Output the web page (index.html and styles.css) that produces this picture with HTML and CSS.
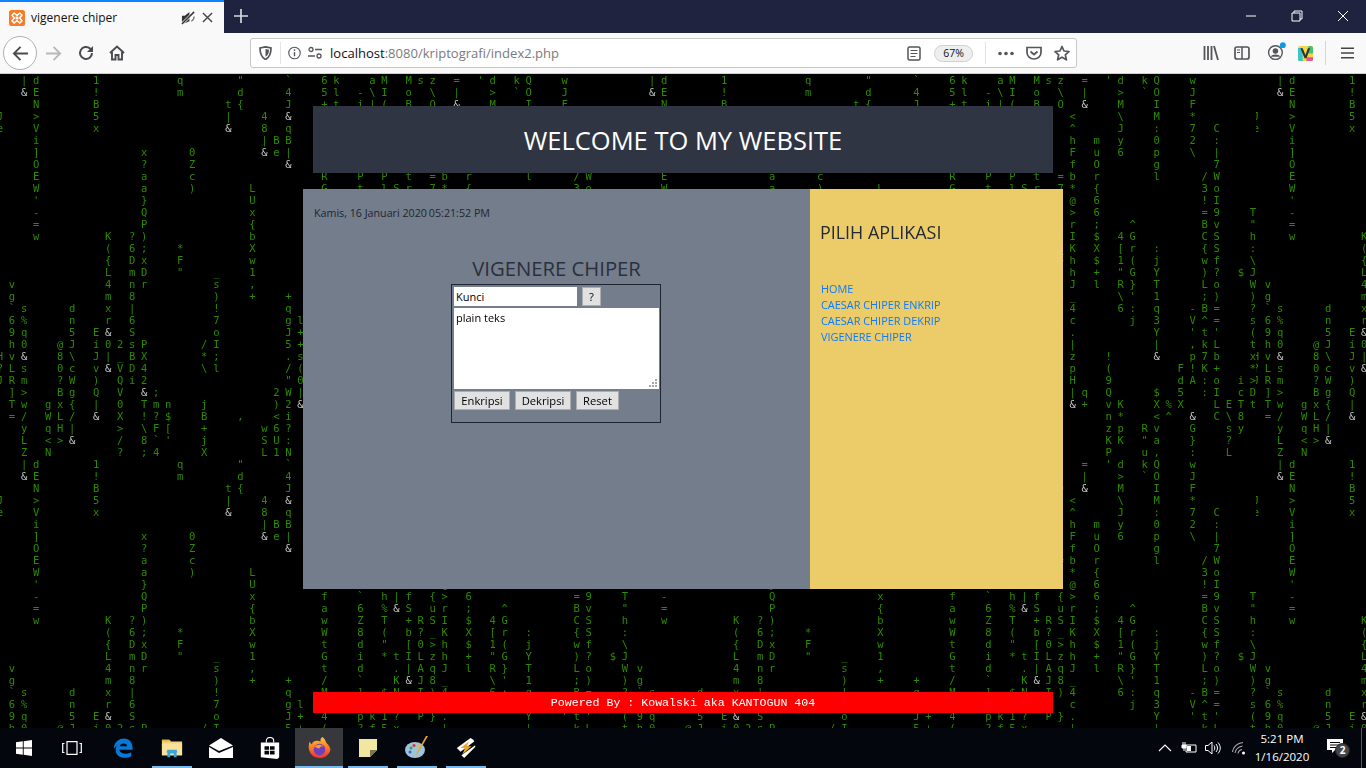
FILE: index.html
```html
<!DOCTYPE html>
<html lang="id">
<head>
<meta charset="utf-8">
<title>vigenere chiper</title>
<link rel="stylesheet" href="styles.css">
</head>
<body>
<header class="browser">
  <div class="tabbar">
    <div class="tab">
      <svg class="fav" viewBox="0 0 16 16"><rect width="16" height="16" rx="2.5" fill="#fb7a24"/><path d="M3 5.2 5.2 3 8 5.4 10.8 3 13 5.2 10.6 8 13 10.8 10.8 13 8 10.6 5.2 13 3 10.8 5.4 8Z" fill="none" stroke="#fff" stroke-width="1.6" stroke-linejoin="round"/><rect x="6.6" y="6.6" width="2.8" height="2.8" fill="#fff"/></svg>
      <span class="tab-title">vigenere chiper</span>
      <svg class="mute" viewBox="0 0 16 16"><path d="M1 6h3l5-4v10l-5 2H1Z" fill="#333"/><path d="M1 15 14 2" stroke="#fff" stroke-width="3"/><path d="M1 15 14 2" stroke="#333" stroke-width="1.6"/><path d="M11 12c2-1 3-3 3-5" fill="none" stroke="#666" stroke-width="1.2"/></svg>
      <svg class="tabx" viewBox="0 0 12 12"><path d="M1 1 11 11M11 1 1 11" stroke="#444" stroke-width="1.5"/></svg>
    </div>
    <svg class="plus" viewBox="0 0 14 14"><path d="M7 0v14M0 7h14" stroke="#d7d8de" stroke-width="1.7"/></svg>
    <div class="winctl">
      <span class="wc"><svg class="wci" viewBox="0 0 12 12"><path d="M1 6h10" stroke="#fff"/></svg></span>
      <span class="wc"><svg class="wci" viewBox="0 0 12 12"><path d="M3 3V1h8v8H9M1 3h8v8H1Z" fill="none" stroke="#fff"/></svg></span>
      <span class="wc"><svg class="wci" viewBox="0 0 12 12"><path d="M1 1 11 11M11 1 1 11" stroke="#fff"/></svg></span>
    </div>
  </div>
  <div class="toolbar">
    <span class="backbtn"><svg class="i18" viewBox="0 0 18 18"><path d="M17 9H2M9 2 2 9l7 7" fill="none" stroke="#4a4a4f" stroke-width="2"/></svg></span>
    <svg class="i18 fwd" viewBox="0 0 18 18"><path d="M1 9h15M9 2l7 7-7 7" fill="none" stroke="#b8b8ba" stroke-width="2"/></svg>
    <svg class="i16 reload" viewBox="0 0 16 16"><path d="M14 8a6 6 0 1 1-2-4.5L14 6" fill="none" stroke="#4a4a4f" stroke-width="2"/><path d="M15 1v6H9Z" fill="#4a4a4f"/></svg>
    <svg class="i16 home" viewBox="0 0 16 16"><path d="M1 8 8 1.500 15 8M3 7v7.500h3.500V10h3v4.500H13V7" fill="none" stroke="#4a4a4f" stroke-width="1.900"/></svg>
    <div class="urlbar">
      <svg class="i13 shield" viewBox="0 0 13 14"><path d="M1 2 6.500 .8 12 2c0 5-.8 9-5.500 11.500C1.800 11 1 7 1 2Z" fill="none" stroke="#55555a" stroke-width="1.700"/><path d="M6.500 3 10 3.800c0 3-.8 5.500-3.500 7Z" fill="#55555a"/></svg>
      <span class="url-sep"></span>
      <svg class="i13 info" viewBox="0 0 14 14"><circle cx="7" cy="7" r="6.200" fill="none" stroke="#55555a" stroke-width="1.200"/><path d="M7 6v4.500" stroke="#55555a" stroke-width="1.500"/><circle cx="7" cy="3.900" r="1" fill="#55555a"/></svg>
      <svg class="i14 perm" viewBox="0 0 14 14"><circle cx="3" cy="3.500" r="2" fill="none" stroke="#55555a" stroke-width="1.300"/><path d="M7 3.500h7M0 10h7" stroke="#55555a" stroke-width="1.500"/><circle cx="11" cy="10" r="2" fill="none" stroke="#55555a" stroke-width="1.300"/></svg>
      <span class="url"><span class="url-host">localhost</span>:8080/kriptografi/index2.php</span>
      <svg class="i14 reader" viewBox="0 0 14 15"><rect x="1" y="1" width="12" height="13" rx="1.500" fill="none" stroke="#55555a" stroke-width="1.500"/><path d="M3.500 4.500h7M3.500 7.500h7M3.500 10.500h5" stroke="#55555a" stroke-width="1.200"/></svg>
      <span class="zoom-pill">67%</span>
      <span class="url-sep2"></span>
      <svg class="i16 dots" viewBox="0 0 16 4"><circle cx="2" cy="2" r="1.800" fill="#55555a"/><circle cx="8" cy="2" r="1.800" fill="#55555a"/><circle cx="14" cy="2" r="1.800" fill="#55555a"/></svg>
      <svg class="i16 pocket" viewBox="0 0 16 14"><path d="M1 1.500h14v5a7 6.500 0 0 1-14 0Z" fill="none" stroke="#55555a" stroke-width="1.700"/><path d="M4.500 5.500 8 8.500l3.500-3" fill="none" stroke="#55555a" stroke-width="1.800"/></svg>
      <svg class="i16 star" viewBox="0 0 16 16"><path d="M8 1.500 10 6l5 .5-3.700 3.300 1.100 5L8 12.200 3.600 14.800l1.100-5L1 6.500 6 6Z" fill="none" stroke="#55555a" stroke-width="1.700" stroke-linejoin="round"/></svg>
    </div>
    <svg class="i16 lib" viewBox="0 0 16 16"><path d="M1.500 1v14M5 1v14M8.500 1v14" stroke="#55555a" stroke-width="1.800"/><path d="M11 1l4 14" stroke="#55555a" stroke-width="1.800"/></svg>
    <svg class="i16 side" viewBox="0 0 16 14"><rect x="1" y="1" width="14" height="12" rx="2" fill="none" stroke="#55555a" stroke-width="1.700"/><path d="M8 1v12" stroke="#55555a" stroke-width="1.500"/><path d="M3 4h3M3 6.500h3" stroke="#55555a"/></svg>
    <svg class="acct" viewBox="0 0 18 18"><circle cx="8" cy="10" r="6.500" fill="none" stroke="#55555a" stroke-width="1.300"/><circle cx="8" cy="8.500" r="2.600" fill="#55555a"/><path d="M3.500 14c1-3 8-3 9 0" fill="#55555a"/><circle cx="15" cy="3" r="2.800" fill="#0a9be8"/></svg>
    <svg class="vext" viewBox="0 0 16 16"><rect width="16" height="16" rx="2" fill="#f6d743"/><path d="M0 2h5v14H2a2 2 0 0 1-2-2Z" fill="#36c6c9"/><path d="M11 0h3a2 2 0 0 1 2 2v6h-5Z" fill="#45c46a"/><path d="M9 12h7v2a2 2 0 0 1-2 2H9Z" fill="#e8549a"/><path d="M2.500 2.500 7 13h2l4-10.500h-2.500L8 9.500 5 2.500Z" fill="#333"/></svg>
    <span class="bar-sep"></span>
    <svg class="menu" viewBox="0 0 14 12"><path d="M0 1h14M0 6h14M0 11h14" stroke="#444" stroke-width="1.600"/></svg>
  </div>
</header>

<main class="page">
  <div class="matrix" id="matrix"></div>
  <div class="wrap">
    <div class="site-head"><h1 class="site-title">WELCOME TO MY WEBSITE</h1></div>
    <div class="columns">
      <section class="content">
        <p class="clock">Kamis, 16 Januari 2020<span class="time">05:21:52 PM</span></p>
        <h2 class="app-title">VIGENERE CHIPER</h2>
        <form class="cipher">
          <div class="keyrow">
            <input class="key" type="text" value="Kunci">
            <button class="btn btn-q" type="button">?</button>
          </div>
          <div class="plain-box">
            <textarea class="plain">plain teks</textarea>
            <svg class="grip" viewBox="0 0 8 8"><path d="M6 0h2v2H6ZM3 3h2v2H3ZM6 3h2v2H6ZM0 6h2v2H0ZM3 6h2v2H3ZM6 6h2v2H6Z" fill="#a8a8a8"/></svg>
          </div>
          <div class="actions">
            <button class="btn btn-a" type="button">Enkripsi</button>
            <button class="btn btn-a" type="button">Dekripsi</button>
            <button class="btn btn-r" type="button">Reset</button>
          </div>
        </form>
      </section>
      <aside class="side-panel">
        <h3 class="side-title">PILIH APLIKASI</h3>
        <nav class="side-nav">
          <a href="#">HOME</a>
          <a href="#">CAESAR CHIPER ENKRIP</a>
          <a href="#">CAESAR CHIPER DEKRIP</a>
          <a href="#">VIGENERE CHIPER</a>
        </nav>
      </aside>
    </div>
    <footer class="site-foot">Powered By : Kowalski aka KANTOGUN 404</footer>
  </div>
</main>

<footer class="taskbar">
  <span class="tb"><svg class="win" viewBox="0 0 16 16"><path d="M0 2.300 6.800 1.300V7.500H0ZM7.700 1.200 16 0V7.500H7.700ZM0 8.400H6.800V14.700L0 13.700ZM7.700 8.400H16V16L7.700 14.800Z" fill="#fff"/></svg></span>
  <span class="tb"><svg class="tv" viewBox="0 0 20 14"><path d="M5 .7h10v12.600H5ZM2.500 2.500H.7v9h1.800M17.500 2.500h1.800v9h-1.800" fill="none" stroke="#fff" stroke-width="1.200"/></svg></span>
  <span class="tb tb-first"><svg class="ic" viewBox="0 0 24 24"><path d="M2 13C2 5 8 1.500 13 1.500c6 0 9.500 4.500 9.500 10.500v2H8c.3 4 7 6 13 2.500v4.500c-7 3.500-17 2-17-7 0-2 1-4.500 3-6C5 10 3 11.500 2 13ZM8.500 10h8c0-4-7.500-4-8 0Z" fill="#0a78d7"/></svg></span>
  <span class="tb on"><svg class="ic" viewBox="0 0 24 24"><path d="M1 3h8l2 2h12v15H1Z" fill="#f3d47b"/><path d="M1 3h8l2 2H1Z" fill="#e6b84f"/><path d="M1 7h22v13H1Z" fill="#fbe29a"/><path d="M7 22v-5h-1l1-3h10l1 3h-1v5h-3v-4h-4v4Z" fill="#3aa7dc"/></svg></span>
  <span class="tb"><svg class="ic-w" viewBox="0 0 24 20"><path d="M0 7.500 12 0l12 7.500L10 13Z" fill="#fff"/><path d="M0 9v11h24V9L10 15Z" fill="#fff"/></svg></span>
  <span class="tb"><svg class="ic" viewBox="0 0 22 24"><path d="M1 6h20v16l-2 2L1 22Z" fill="#fff"/><path d="M7 6V4a4 3.500 0 0 1 8 0v2" fill="none" stroke="#fff" stroke-width="1.200"/><path d="M5 10h5v4H5ZM11 10h5v4h-5ZM5 15h5v4H5ZM11 15h5v4h-5Z" fill="#03060d"/></svg></span>
  <span class="tb active"><svg class="fx" viewBox="0 0 24 24"><defs><linearGradient id="fxg" x1="0" y1="0" x2="0" y2="1"><stop offset="0" stop-color="#ffc43a"/><stop offset=".5" stop-color="#ff7a20"/><stop offset="1" stop-color="#e8303a"/></linearGradient></defs><path d="M15 0c4 3 3 5 5 7 3 3 3.500 6 3.500 6A11.500 11.500 0 1 1 1 8c0-2 .8-3 1-3 .3 1.500 1 2 2 2.500C5 5 7 4 9 4c2 0 3 .5 4 1 0-2 0-4 2-5Z" fill="url(#fxg)"/><circle cx="12" cy="13" r="6" fill="#6b3fc0"/><path d="M7 10c2-2 6-3 9 0-2-.5-4 0-4 2-2 0-4-1-5-2Z" fill="#ff9a30"/></svg></span>
  <span class="tb on"><svg class="note" viewBox="0 0 18 18"><path d="M0 0h18v11l-7 7H0Z" fill="#f2e7a0"/><path d="M18 11h-7v7Z" fill="#7b7650"/></svg></span>
  <span class="tb on"><svg class="ic paint" viewBox="0 0 24 24"><ellipse cx="10" cy="14" rx="10" ry="8" fill="#9ec4dc"/><circle cx="6" cy="12" r="1.500" fill="#3aa05a"/><circle cx="9" cy="9.500" r="1.500" fill="#d33"/><circle cx="5" cy="16" r="1.500" fill="#36c"/><circle cx="13" cy="10" r="1.500" fill="#eb3"/><path d="M23 0 13 17l-2 3 1-4L21 0Z" fill="#e8a33d"/></svg></span>
  <span class="tb on"><svg class="ic" viewBox="0 0 22 24"><path d="M16 1 1 12l4 4 15-11-1-2Z" fill="#fff"/><path d="M21 9 6 20l3 3 12-12Z" fill="#fff"/><path d="M14 5 5 12h5l-3 7 10-9h-5Z" fill="#f2a81d"/></svg></span>
  <div class="tray">
    <svg class="chev" viewBox="0 0 14 8"><path d="M1 7 7 1l6 6" fill="none" stroke="#fff" stroke-width="1.100"/></svg>
    <svg class="batt" viewBox="0 0 16 12"><path d="M5 3h10v7H5Z" fill="none" stroke="#fff"/><path d="M6 4h4v5H6Z" fill="#fff"/><path d="M1 3h4v3H1ZM2 0v3M4 0v3M3 6v3" stroke="#fff" fill="#fff"/></svg>
    <svg class="spk" viewBox="0 0 16 14"><path d="M.5 4.500H3L7 1v12L3 9.500H.5Z" fill="none" stroke="#fff"/><path d="M9 4.500c1 1.500 1 3.500 0 5M11 3c2 2.500 2 5.500 0 8M13 1.500c3 3.500 3 7.500 0 11" fill="none" stroke="#fff"/></svg>
    <svg class="wifi" viewBox="0 0 14 14"><path d="M.5 11C1 6 5 2 11 1.500M3 12c.5-3.500 3-6 7.500-7M6 12.500c.3-2 1.500-3.500 4-4" fill="none" stroke="#a9abad" stroke-width="1.100"/><circle cx="11.500" cy="12" r="1.500" fill="#fff"/></svg>
    <div class="clockbox"><span>5:21 PM</span><span>1/16/2020</span></div>
    <span class="notif">
      <svg class="nicon" viewBox="0 0 16 14"><path d="M0 0h16v11H8l-3 3v-3H0Z" fill="#fff"/><path d="M3 3.500h10M3 6h10M3 8.500h6" stroke="#03060d"/></svg>
      <span class="badge">2</span>
    </span>
    <span class="desk"></span>
  </div>
</footer>
<script src="matrix.js"></script>
</body>
</html>
```
FILE: styles.css
```css
* { box-sizing: border-box; }
html, body { margin: 0; height: 768px; overflow: hidden; background: #000; }
body { display: flex; flex-direction: column; width: 1366px; font-family: "Open Sans", "Noto Sans", sans-serif; }
svg { display: block; flex: none; }

/* browser chrome */
.browser { flex: none; height: 74px; }
.tabbar { height: 33px; background: #202340; display: flex; align-items: flex-start; }
.tab { width: 224px; height: 33px; background: #f9f9fa; border-top: 2px solid #0a84ff; display: flex; align-items: center; padding-left: 9px; }
.fav { width: 16px; height: 16px; }
.tab-title { margin-left: 6px; font-size: 12px; color: #111; }
.mute { width: 15px; height: 15px; margin-left: auto; }
.tabx { width: 11px; height: 11px; margin: 0 11px 0 6px; }
.plus { width: 14px; height: 14px; margin: 9px 0 0 10px; }
.winctl { margin-left: auto; display: flex; }
.wc { width: 46px; height: 32px; display: flex; align-items: center; justify-content: center; }
.wci { width: 12px; height: 12px; }
.toolbar { height: 41px; background: #f9f9fa; border-bottom: 1px solid #cfcfd1; display: flex; align-items: center; position: relative; }
.backbtn { width: 34px; height: 34px; margin-left: 3px; border: 1px solid #b1b1b3; border-radius: 50%; background: #fff; display: flex; align-items: center; justify-content: center; }
.i18 { width: 17px; height: 17px; }
.i16 { width: 16px; height: 16px; }
.i14 { width: 14px; height: 14px; }
.i13 { width: 13px; height: 14px; }
.fwd { margin-left: 8px; }
.reload { margin-left: 16px; }
.home { margin-left: 15px; }
.urlbar { width: 827px; height: 30px; margin-left: 125px; background: #fff; border: 1px solid #c8c8ca; border-radius: 3px; display: flex; align-items: center; }
.shield { margin-left: 8px; }
.url-sep { width: 1px; height: 22px; background: #e3e3e5; margin-left: 8px; }
.info { margin-left: 7px; }
.perm { margin-left: 7px; }
.url { margin-left: 8px; font-size: 13.050px; color: #7a7a7d; width: 577px; white-space: nowrap; }
.url-host { color: #111; }
.reader { margin-left: 0; height: 15px; }
.zoom-pill { margin-left: 13px; width: 39px; height: 17px; border: 1px solid #d0d0d2; border-radius: 9px; background: #eee; font-size: 10.500px; line-height: 15px; text-align: center; color: #111; }
.url-sep2 { width: 1px; height: 22px; background: #e3e3e5; margin-left: 12px; }
.dots { height: 5px; margin-left: 12px; }
.pocket { height: 14px; margin-left: 12px; }
.star { margin-left: 12px; }
.lib { margin-left: 126px; }
.side { height: 14px; margin-left: 15px; }
.acct { width: 19px; height: 19px; margin: -3px 0 0 17px; }
.vext { width: 15px; height: 15px; margin-left: 12px; }
.bar-sep { width: 1px; height: 24px; background: #d5d5d7; margin-left: 12px; }
.menu { width: 13px; height: 12px; margin-left: 15px; }

/* page */
.page { flex: none; height: 654px; position: relative; overflow: hidden; background: #000; }
.matrix { position: absolute; inset: 0; display: grid; grid-template-columns: repeat(3, 628px); grid-auto-rows: 384px; filter: blur(.25px); }
.tile { overflow: hidden; font: 10.500px/12px "DejaVu Sans Mono", monospace; letter-spacing: 5.680px; color: #2e8a00; }
.line { white-space: pre; margin-left: -3.160px; height: 12px; }
.amp { color: #c6ccc6; }
.wrap { position: relative; width: 760px; margin: 0 auto; padding-top: 32px; }
.site-head { height: 67px; margin: 0 10px 16px; background: #2f3542; display: flex; align-items: center; justify-content: center; }
.site-title { margin: 0; font-size: 25.500px; font-weight: 400; color: #fff; }
.columns { display: flex; height: 400px; }
.content { width: 507px; background: #747d8c; padding: 16px 0 0 11px; }
.clock { margin: 0; font-size: 10.700px; line-height: 16px; color: #1f2530; }
.time { margin-left: 2px; }
.app-title { margin: 32px 0 0 -11px; font-size: 20.300px; line-height: 30px; font-weight: 400; text-align: center; color: #2a303c; }
.cipher { width: 210px; height: 139px; margin: 1px 0 0 137px; border: 1px solid #1f2530; padding: 2px; }
.keyrow { display: flex; gap: 5px; height: 21px; }
.key { width: 123px; height: 19px; border: 0; padding: 0 2px; font: 11px "Open Sans", sans-serif; color: #000; background: #fff; outline: 0; }
.btn { height: 19px; padding: 0; background: #e1e1e1; border: 1px solid #adadad; font: 11.200px "Open Sans", sans-serif; color: #000; }
.btn-q { width: 19px; }
.plain-box { position: relative; width: 205px; height: 81px; }
.plain { display: block; width: 205px; height: 81px; border: 0; padding: 3px 2px; margin: 0; resize: none; font: 11px/13px "Open Sans", sans-serif; background: #fff; color: #000; outline: 0; }
.grip { position: absolute; right: 2px; bottom: 2px; width: 8px; height: 8px; }
.actions { display: flex; gap: 5px; margin-top: 2px; }
.btn-a { width: 56px; }
.btn-r { width: 43px; }
.side-panel { width: 253px; background: #eccc68; padding: 31px 0 0 10px; }
.side-title { margin: 0; font-size: 17.900px; line-height: 24px; font-weight: 400; color: #242a35; }
.side-nav { display: flex; flex-direction: column; margin-top: 37px; padding-left: 1px; }
.side-nav a { font-size: 10.900px; line-height: 16px; color: #0a7bff; text-decoration: none; white-space: nowrap; }
.site-foot { height: 21px; margin: 103px 10px 0; background: #f00; color: #fff; font: 11.600px/21px "Liberation Mono", monospace; text-align: center; }

/* taskbar */
.taskbar { flex: none; height: 40px; background: #03060d; display: flex; align-items: stretch; }
.tb { width: 48px; display: flex; align-items: center; justify-content: center; position: relative; }
.tb-first { margin-left: 3px; }
.tb + .tb + .tb + .tb { margin-left: 1px; }
.on::after, .active::after { content: ""; position: absolute; left: 4px; right: 4px; bottom: 0; height: 2px; background: #76b9ed; }
.active { background: #36383c; }
.active::after { left: 0; right: 0; }
.win { width: 16px; height: 16px; }
.tv { width: 20px; height: 14px; }
.ic { width: 22px; height: 22px; }
.ic-w { width: 24px; height: 20px; }
.paint { width: 24px; height: 24px; }
.fx { width: 23px; height: 23px; }
.note { width: 18px; height: 18px; }
.tray { margin-left: auto; display: flex; align-items: center; }
.chev { width: 14px; height: 8px; }
.batt { width: 16px; height: 12px; margin-left: 9px; }
.spk { width: 16px; height: 14px; margin-left: 8px; }
.wifi { width: 14px; height: 14px; margin-left: 11px; }
.clockbox { width: 78px; margin-left: -3px; display: flex; flex-direction: column; align-items: center; font-size: 11.500px; line-height: 18px; color: #fff; }
.notif { width: 24px; height: 24px; margin-left: 4px; position: relative; }
.nicon { width: 16px; height: 14px; margin: 3px 0 0 2px; }
.badge { position: absolute; left: 10px; top: 7px; width: 15px; height: 15px; border-radius: 50%; background: #45464a; border: 1px solid #222; color: #fff; font-size: 10px; font-weight: 700; line-height: 13px; text-align: center; }
.desk { width: 1px; height: 40px; background: #55575c; margin: 0 4px 0 12px; }
```
FILE: matrix.js
```js
var ROWS = [
  "2| 3d 81 15q 20\" 24` 276 28k 31a 32M 34M 35s 36z 38= 40' 41d 43k 44Q 47w",
  "2& 3E 8! 15m 20d 244 275 28l 30- 31\\ 32I 34o 36\\ 38| 41> 43` 44O 47J",
  "3N 8B 19t 20{ 24J 27+ 28t 30i 31| 32( 34B 36O 38& 41M 44I 47F",
  "0J 3> 85 19| 224 24& 37< 41\\ 44M 47*",
  "0e 3V 8x 19& 228 24q 37^ 41J 44: 477 49C",
  "3i 22| 23B 24B 37h 39m 41y 440 472 49:",
  "3] 12x 160 22& 23e 24| 37F 39u 416 44p 47\\ 49|",
  "3O 12? 16Z 24& 37f 39O 44g 497",
  "3E 12a 16c 27R 30P 32P 34t 36= 37b 39r 44l 48/ 49W",
  "3W 12a 16) 21L 27G 30t 32l 33S 34r 367 37* 39{ 483 49o",
  "3' 12} 21U 37@ 396 48! 49I",
  "3- 12Q 21x 27f 30` 32h 33| 34f 36{ 37> 396 48= 499 52T",
  "3= 12P 21{ 27a 306 32% 33& 34S 36u 37r 39; 42^ 48B 49v 52\"",
  "3w 9K 11? 12) 21b 27w 30Z 32T 34+ 35R 36S 37I 39$ 414 42G 48C 49S 52h",
  "9( 116 12; 15* 21X 27W 308 32( 34b 35? 36_ 37K 39X 41[ 42r 44: 48{ 49S 52:",
  "9{ 11D 12x 15F 21w 27t 30d 32\" 34[ 350 36> 37h 39$ 411 42( 44j 48w 49f 52\\",
  "9L 11m 12D 15\" 18_ 211 27G 30i 32* 33t 34I 35L 36z 37h 39+ 41\" 42G 44Y 48) 49? 51$ 52J",
  "1v 94 11n 12r 18s 21, 27t 30d 33. 34| 35A 36q 37J 39l 41R 42} 44T 48L 49o 52W",
  "1g 9m 118 18) 21+ 24+ 27/ 30` 33K 34& 35J 368 37_ 41\\ 42' 441 48; 49) 52)",
  "1` 2s 6d 9x 11| 18! 24q 27M 30] 32$ 33N 35I 36) 374 416 42: 44q 47- 48B 49= 52?",
  "16 2% 6n 9r 116 187 24g 25l 37c 42j 443 47V 48^ 49= 52s",
  "19 2q 65 8E 9& 11S 18o 24J 25+ 274 30p 31k 321 33? 35P 36} 37. 44Y 47' 48t 49' 52(",
  "1h 20 5@ 6J 8i 90 102 11s 12P 17/ 18I 245 25+ 27( 30? 31f 325 33x 37| 44| 47, 48k 49L 52t",
  "0H 1v 2& 58 6\\ 8J 9| 10_ 11B 12X 17* 18; 24. 25s 37z 40! 44& 47p 487 49b 52x",
  "0? 1L 2s 50 6c 8v 9& 10V 11D 124 17\\ 18l 24/ 25( 37p 40( 46F 47! 48K 49+ 52*",
  "0J 1R 2m 5? 6W 8) 10Q 11i 122 24\" 250 37H 409 46d 47A 48: 49o 51i 52>",
  "1] 2> 5B 6g 8Q 10V 12& 13; 232 24W 25| 37| 38q 40Q 44$ 465 48: 49I 51c 52D",
  "1T 2w 4g 5x 6{ 8| 100 12T 13m 14n 17j 23) 242 25& 37& 38+ 40v 41K 44X 45% 46X 49L 50E 51T 52t",
  "1= 2/ 4W 5L 6/ 8& 10X 12! 13? 14$ 17B 20, 23< 24i 40n 41* 44< 45^ 47& 49C 50\\ 518",
  "2y 4q 5H 6| 10> 12\\ 13F 14[ 17+ 22w 236 24? 40z 41p 43R 44v 47G 50s 51y",
  "2L 4< 5> 6& 10/ 128 13` 14' 17j 22S 23U 24: 40K 41K 43\" 44a 47} 50?",
  "2Z 4N 10? 12; 134 17X 22L 231 24N 40P 43u 44, 47: 50L"
];

function buildTile() {
  var tile = document.createElement("div");
  tile.className = "tile";
  ROWS.forEach(function (row) {
    var cells = new Array(53).fill(" ");
    row.split(" ").forEach(function (tok) {
      cells[parseInt(tok.slice(0, -1), 10)] = tok.slice(-1);
    });
    var line = document.createElement("div");
    line.className = "line";
    cells.forEach(function (ch) {
      if (ch === "&") {
        var amp = document.createElement("span");
        amp.className = "amp";
        amp.textContent = ch;
        line.appendChild(amp);
      } else {
        line.appendChild(document.createTextNode(ch));
      }
    });
    tile.appendChild(line);
  });
  return tile;
}

var matrix = document.getElementById("matrix");
for (var i = 0; i < 6; i++) {
  matrix.appendChild(buildTile());
}
```
